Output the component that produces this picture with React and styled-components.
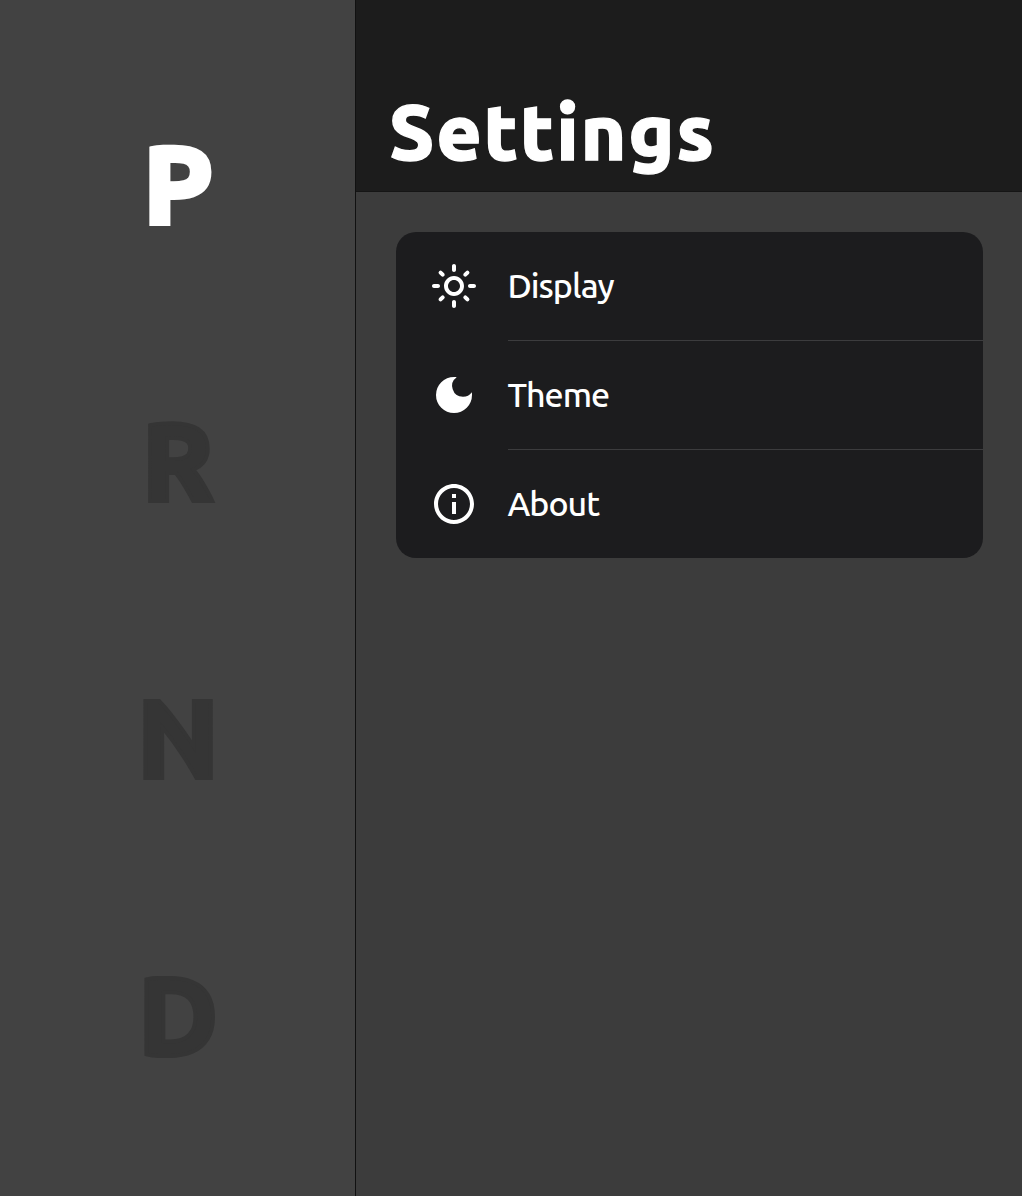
import React from "react";
import styled, { createGlobalStyle } from "styled-components";
import { MdOutlineLightMode, MdDarkMode, MdOutlineInfo } from "react-icons/md";

const GlobalStyle = createGlobalStyle`
  *, *::before, *::after { box-sizing: border-box; }
  body {
    margin: 0;
    background: #fff;
    color: #fff;
    font-family: Ubuntu, "Noto Sans", "Open Sans", sans-serif;
  }
`;

const Screen = styled.div`
  display: flex;
  width: 1022px;
  height: 1196px;
  overflow: hidden;
`;

const GearRail = styled.aside`
  display: flex;
  flex-direction: column;
  flex: 0 0 356px;
  padding: 44px 0 43px;
  background: #424242;
  border-right: 1px solid #111;
`;

const Gear = styled.div`
  display: flex;
  align-items: center;
  justify-content: center;
  flex: 1;
  padding-left: 1px;
  color: ${(p) => (p.$active ? "#fff" : "#353535")};
  font-size: 110px;
  font-weight: 900;
  line-height: 1;
  -webkit-text-stroke: 3.8px currentColor;
`;

const Main = styled.main`
  display: flex;
  flex-direction: column;
  flex: 1;
  background: #3c3c3c;
`;

const Header = styled.header`
  display: flex;
  align-items: flex-end;
  height: 192px;
  padding: 0 33px 12.5px;
  background: #1c1c1c;
  border-bottom: 1px solid #151515;
`;

const Title = styled.h1`
  margin: 0;
  font-size: 78px;
  font-weight: 800;
  line-height: 96px;
  letter-spacing: 1.75px;
  -webkit-text-stroke: 1.4px currentColor;
`;

const Card = styled.ul`
  margin: 40px 39.5px 0 40px;
  padding: 0;
  list-style: none;
  overflow: hidden;
  border-radius: 20px;
  background: #1c1c1e;
`;

const Row = styled.li`
  display: flex;
  align-items: stretch;
  height: ${(p) => (p.$last ? 108 : 109)}px;
  padding-left: 34px;
`;

const IconSlot = styled.span`
  display: flex;
  align-items: center;
  width: 78px;
  height: 108px;
  font-size: 48px;
`;

const Label = styled.span`
  display: flex;
  align-items: center;
  flex: 1;
  padding-bottom: 2px;
  font-size: 34px;
  font-weight: 460;
  letter-spacing: -1px;
  text-indent: -0.6px;
  border-bottom: ${(p) => (p.$last ? "0" : "1px solid #3c3c3e")};
`;

const gears = ["P", "R", "N", "D"];

const items = [
  { label: "Display", Icon: MdOutlineLightMode },
  { label: "Theme", Icon: MdDarkMode },
  { label: "About", Icon: MdOutlineInfo },
];

export default function App() {
  return (
    <>
      <GlobalStyle />
      <Screen>
        <GearRail>
          {gears.map((letter, i) => (
            <Gear key={letter} $active={i === 0}>
              {letter}
            </Gear>
          ))}
        </GearRail>
        <Main>
          <Header>
            <Title>Settings</Title>
          </Header>
          <Card>
            {items.map(({ label, Icon }, i) => (
              <Row key={label} $last={i === items.length - 1}>
                <IconSlot>
                  <Icon />
                </IconSlot>
                <Label $last={i === items.length - 1}>{label}</Label>
              </Row>
            ))}
          </Card>
        </Main>
      </Screen>
    </>
  );
}
